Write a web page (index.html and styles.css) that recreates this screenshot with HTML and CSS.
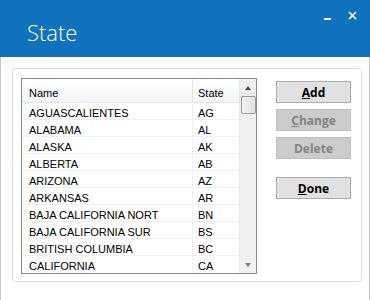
FILE: index.html
```html
<!DOCTYPE html>
<html lang="en">
<head>
    <meta charset="UTF-8">
    <title>State</title>
    <link rel="stylesheet" href="styles.css">
</head>
<body>
    <div class="window">
        <div class="titlebar">
            <h1>State</h1>
            <div class="controls">
                <span class="minimize"></span>
                <svg class="close" width="9" height="9" viewBox="0 0 9 9">
                    <path d="M1 1 L8 8 M8 1 L1 8" stroke="#fff" stroke-width="1.6"/>
                </svg>
            </div>
        </div>

        <div class="content">
            <div class="panel">
                <div class="list">
                    <div class="grid">
                        <div class="row head">
                            <span class="name">Name</span>
                            <span class="code">State</span>
                        </div>
                        <div class="row"><span class="name">AGUASCALIENTES</span><span class="code">AG</span></div>
                        <div class="row"><span class="name">ALABAMA</span><span class="code">AL</span></div>
                        <div class="row"><span class="name">ALASKA</span><span class="code">AK</span></div>
                        <div class="row"><span class="name">ALBERTA</span><span class="code">AB</span></div>
                        <div class="row"><span class="name">ARIZONA</span><span class="code">AZ</span></div>
                        <div class="row"><span class="name">ARKANSAS</span><span class="code">AR</span></div>
                        <div class="row"><span class="name">BAJA CALIFORNIA NORT</span><span class="code">BN</span></div>
                        <div class="row"><span class="name">BAJA CALIFORNIA SUR</span><span class="code">BS</span></div>
                        <div class="row"><span class="name">BRITISH COLUMBIA</span><span class="code">BC</span></div>
                        <div class="row"><span class="name">CALIFORNIA</span><span class="code">CA</span></div>
                    </div>
                    <div class="scrollbar">
                        <span class="arrow up"></span>
                        <span class="thumb"></span>
                        <span class="track"></span>
                        <span class="arrow down"></span>
                    </div>
                </div>

                <div class="buttons">
                    <button type="button"><u>A</u>dd</button>
                    <button type="button" class="disabled" disabled><u>C</u>hange</button>
                    <button type="button" class="disabled" disabled>Delete</button>
                    <button type="button" class="done"><u>D</u>one</button>
                </div>
            </div>
        </div>
    </div>
</body>
</html>
```

FILE: styles.css
```css
body{
    margin: 0;
    background: #fff;
}

.window{
    width: 370px;
    height: 300px;
    box-sizing: border-box;
    display: flex;
    flex-direction: column;
}

/*****
Title bar
******/
.titlebar{
    height: 57px;
    background: #1072bc;
    position: relative;
    flex-shrink: 0;
}

.titlebar h1{
    margin: 0;
    padding: 17px 0 0 27px;
    font-family: "Open Sans", sans-serif;
    font-weight: 300;
    font-size: 22px;
    line-height: 30px;
    color: #fff;
}

.controls{
    position: absolute;
    top: 11px;
    right: 13px;
    display: flex;
    align-items: flex-start;
    gap: 17px;
}

.minimize{
    display: block;
    width: 7px;
    height: 2px;
    margin-top: 7px;
    background: #fff;
}

.close{
    display: block;
}

/*****
Content
******/
.content{
    flex: 1;
    border-left: 1px solid #c4c4c4;
    border-right: 1px solid #c4c4c4;
    padding: 11px 7px 0 11px;
}

.panel{
    height: 214px;
    box-sizing: border-box;
    border: 1px solid #d9dfe5;
    border-radius: 3px;
    padding: 9px 0 0 8px;
    display: flex;
    align-items: flex-start;
}

/*****
List
******/
.list{
    border: 1px solid #828790;
    display: flex;
    font-family: "Liberation Sans", Arial, sans-serif;
    font-size: 11px;
    color: #000;
}

.grid{
    width: 217px;
}

.row{
    display: flex;
    height: 17px;
    line-height: 16px;
    border-bottom: 1px solid #f0f0f0;
    box-sizing: border-box;
}

.row span{
    display: block;
    box-sizing: border-box;
    padding-top: 2px;
}

.name{
    width: 171px;
    padding-left: 7px;
    border-right: 1px solid #f0f0f0;
}

.code{
    width: 46px;
    padding-left: 5px;
}

.row.head{
    height: 24px;
    line-height: 22px;
    background: linear-gradient(#ffffff, #f3f5f8);
    border-bottom: 1px solid #e3e6ea;
}

.row.head span{
    padding-top: 3px;
}

.row.head .name{
    border-right: 1px solid #e3e6ea;
}

.row:last-child{
    border-bottom: none;
}

.scrollbar{
    width: 17px;
    background: #f0f0f0;
    border-left: 1px solid #e8e8e8;
    box-sizing: border-box;
    display: flex;
    flex-direction: column;
    align-items: center;
}

.arrow{
    width: 0;
    height: 0;
    border-left: 3px solid transparent;
    border-right: 3px solid transparent;
}

.arrow.up{
    margin-top: 7px;
    border-bottom: 4px solid #444;
}

.arrow.down{
    margin-bottom: 6px;
    border-top: 4px solid #777;
}

.thumb{
    display: block;
    width: 15px;
    height: 18px;
    margin-top: 6px;
    box-sizing: border-box;
    border: 1px solid #9a9a9a;
    border-radius: 2px;
    background: linear-gradient(90deg, #f2f2f2, #e0e0e0);
}

.track{
    flex: 1;
}

/*****
Buttons
******/
.buttons{
    margin-left: 19px;
    padding-top: 3px;
    display: flex;
    flex-direction: column;
}

.buttons button{
    width: 75px;
    height: 22px;
    margin-bottom: 6px;
    padding: 0;
    font-family: "Open Sans", sans-serif;
    font-weight: bold;
    font-size: 12px;
    color: #000;
    background: #e1e1e1;
    border: 1px solid #adadad;
}

.buttons button.disabled{
    background: #cccccc;
    border-color: #bfbfbf;
    color: #838383;
}

.buttons button.done{
    margin-top: 12px;
}
```
